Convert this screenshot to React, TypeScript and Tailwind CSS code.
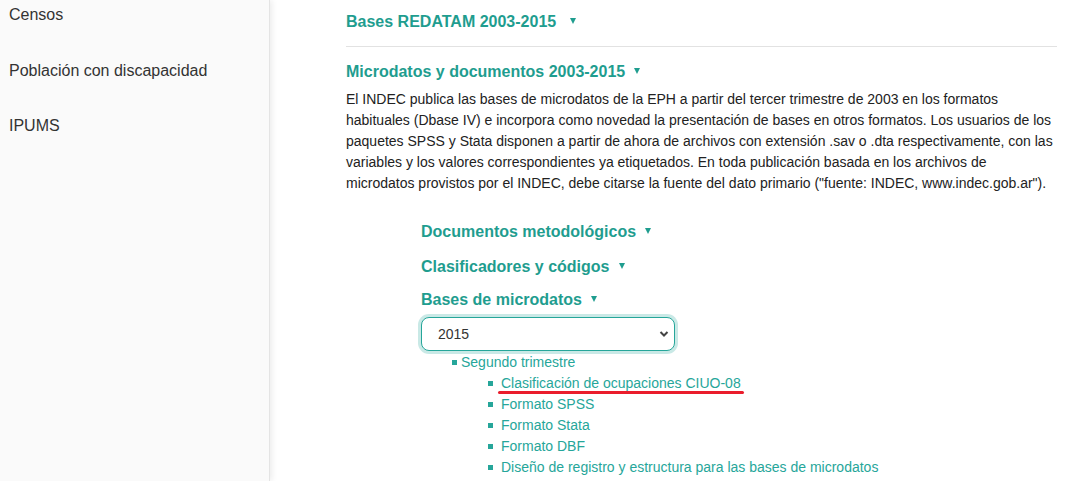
import React from 'react';

const heading = "font-bold text-[16px] leading-[20px] text-[#1f9d8f]";

const Caret = () => (
  <span className="inline-block align-middle ml-[9px] mb-[3px] w-0 h-0 border-l-[3.5px] border-r-[3.5px] border-t-[6px] border-l-transparent border-r-transparent border-t-[#1f9d8f]" />
);

const Item: React.FC<{ children: React.ReactNode; mark?: boolean }> = ({ children, mark }) => (
  <li className="flex items-center h-[21px]">
    <span className="w-[5px] h-[5px] bg-[#26a69a] mr-[8px] shrink-0" />
    <a href="#" className="relative text-[#26a69a] whitespace-nowrap">
      {children}
      {mark && (
        <span className="absolute left-[-3px] right-[-3px] top-[18px] h-[3px] rounded-full bg-[#ea1d2c]" />
      )}
    </a>
  </li>
);

const App: React.FC = () => {
  const files = [
    'Clasificación de ocupaciones CIUO-08',
    'Formato SPSS',
    'Formato Stata',
    'Formato DBF',
    'Diseño de registro y estructura para las bases de microdatos',
  ];

  return (
    <div className="flex w-[1092px] h-[481px] overflow-hidden bg-white font-['Liberation_Sans',Arial,sans-serif]">
      {/* --- Sidebar --- */}
      <aside className="w-[270px] shrink-0 bg-[#fafafa] border-r border-[#e4e4e4] shadow-[2px_0_6px_rgba(0,0,0,0.08)] pl-[9px] pt-[5px] text-[16px] text-[#333]">
        <div className="h-[20px] leading-[20px]">Censos</div>
        <div className="h-[20px] leading-[20px] mt-[36px]">Población con discapacidad</div>
        <div className="h-[20px] leading-[20px] mt-[35px]">IPUMS</div>
      </aside>

      {/* --- Content --- */}
      <main className="flex-1 pl-[76px] pr-[35px] pt-[12px]">
        <h3 className={heading}>
          Bases REDATAM 2003-2015
          <span className="ml-[5px]"><Caret /></span>
        </h3>
        <hr className="mt-[14px] border-t border-[#e2e2e2]" />

        <h3 className={`${heading} mt-[15px]`}>
          Microdatos y documentos 2003-2015
          <Caret />
        </h3>
        <p className="mt-[7px] text-[14px] leading-[21px] text-[#222]">
          El INDEC publica las bases de microdatos de la EPH a partir del tercer trimestre de 2003 en los formatos
          habituales (Dbase IV) e incorpora como novedad la presentación de bases en otros formatos. Los usuarios de los
          paquetes SPSS y Stata disponen a partir de ahora de archivos con extensión .sav o .dta respectivamente, con las
          variables y los valores correspondientes ya etiquetados. En toda publicación basada en los archivos de
          microdatos provistos por el INDEC, debe citarse la fuente del dato primario ("fuente: INDEC, www.indec.gob.ar").
        </p>

        <div className="pl-[75px]">
          <h4 className={`${heading} mt-[28px]`}>
            Documentos metodológicos
            <Caret />
          </h4>
          <h4 className={`${heading} mt-[15px]`}>
            Clasificadores y códigos
            <Caret />
          </h4>
          <h4 className={`${heading} mt-[13px]`}>
            Bases de microdatos
            <Caret />
          </h4>

          <div className="relative mt-[7px] w-[254px]">
            <select
              defaultValue="2015"
              className="appearance-none w-full h-[34px] pl-[16px] rounded-[8px] border border-[#26a69a] bg-white text-[14px] text-[#333] shadow-[0_0_0_3px_rgba(38,166,154,0.25)] outline-none"
            >
              <option>2015</option>
              <option>2014</option>
              <option>2013</option>
            </select>
            <svg className="absolute right-[6px] top-[13px] pointer-events-none" width="10" height="8" viewBox="0 0 10 8">
              <path d="M1.5 2 L5 5.5 L8.5 2" fill="none" stroke="#444" strokeWidth="2" />
            </svg>
          </div>

          <ul className="mt-[1px] pl-[31px] text-[14px]">
            <li className="flex items-center h-[21px]">
              <span className="w-[5px] h-[5px] bg-[#26a69a] mr-[4px] shrink-0" />
              <span className="text-[#26a69a]">Segundo trimestre</span>
            </li>
            <ul className="pl-[36px]">
              {files.map((f, i) => (
                <Item key={f} mark={i === 0}>{f}</Item>
              ))}
            </ul>
          </ul>
        </div>
      </main>
    </div>
  );
};

export default App;
